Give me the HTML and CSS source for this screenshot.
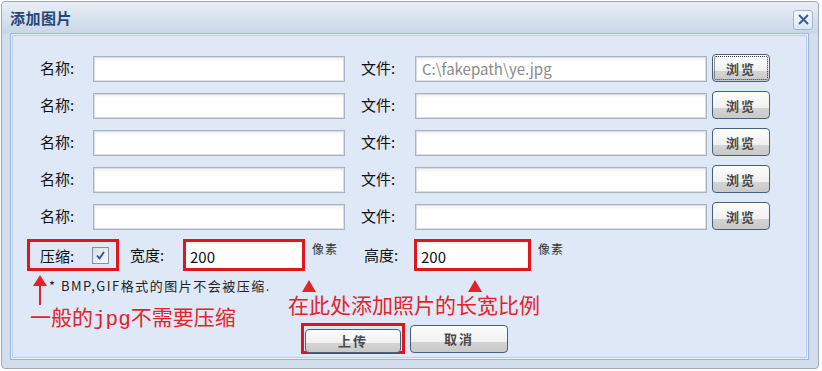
FILE: index.html
```html
<!DOCTYPE html>
<html lang="zh-CN">
<head>
    <meta charset="UTF-8" />
    <title>添加图片</title>
    <link rel="stylesheet" href="styles.css">
</head>
<body>

<div class="dialog">
    <div class="titlebar">
        <span class="title">添加图片</span>
        <button class="close" type="button">
            <svg width="13" height="13" viewBox="0 0 13 13"><path d="M2 2 L11 11 M11 2 L2 11" stroke="#3b5d95" stroke-width="2" fill="none"/></svg>
        </button>
    </div>

    <div class="panel">
        <form id="upload">
            <div class="row">
                <label class="lbl">名称:</label>
                <input type="text" class="txt name" name="name1"/>
                <label class="lbl file-lbl">文件:</label>
                <input type="text" class="txt path" name="file1" value="C:\fakepath\ye.jpg"/>
                <button type="button" class="btn browse focused">浏览</button>
            </div>
            <div class="row">
                <label class="lbl">名称:</label>
                <input type="text" class="txt name" name="name2"/>
                <label class="lbl file-lbl">文件:</label>
                <input type="text" class="txt path" name="file2"/>
                <button type="button" class="btn browse">浏览</button>
            </div>
            <div class="row">
                <label class="lbl">名称:</label>
                <input type="text" class="txt name" name="name3"/>
                <label class="lbl file-lbl">文件:</label>
                <input type="text" class="txt path" name="file3"/>
                <button type="button" class="btn browse">浏览</button>
            </div>
            <div class="row">
                <label class="lbl">名称:</label>
                <input type="text" class="txt name" name="name4"/>
                <label class="lbl file-lbl">文件:</label>
                <input type="text" class="txt path" name="file4"/>
                <button type="button" class="btn browse">浏览</button>
            </div>
            <div class="row">
                <label class="lbl">名称:</label>
                <input type="text" class="txt name" name="name5"/>
                <label class="lbl file-lbl">文件:</label>
                <input type="text" class="txt path" name="file5"/>
                <button type="button" class="btn browse">浏览</button>
            </div>

            <div class="size-row">
                <div class="mark compress">
                    <span class="lbl-inline">压缩:</span>
                    <svg class="check" width="17" height="17" viewBox="0 0 17 17">
                        <defs>
                            <linearGradient id="cb" x1="0" y1="0" x2="1" y2="1">
                                <stop offset="0" stop-color="#d9dee6"/>
                                <stop offset="1" stop-color="#f7f8fa"/>
                            </linearGradient>
                        </defs>
                        <rect x="0.5" y="0.5" width="16" height="16" fill="url(#cb)" stroke="#8391a6"/>
                        <path d="M5 8.5 L7.5 11.5 L12 5" stroke="#2d4f9e" stroke-width="1.8" fill="none"/>
                    </svg>
                </div>
                <span class="lbl size-lbl">宽度:</span>
                <div class="mark field w"><input type="text" name="width" value="200"/></div>
                <span class="unit">像素</span>
                <span class="lbl size-lbl h-lbl">高度:</span>
                <div class="mark field h"><input type="text" name="height" value="200"/></div>
                <span class="unit">像素</span>
            </div>

            <div class="bottom">
                <div class="left">
                    <div class="note">
                        <svg class="arrow" width="14" height="30" viewBox="0 0 14 30">
                            <polygon points="7,0 14,11 0,11" fill="#e3222b"/>
                            <rect x="6" y="10" width="2" height="20" fill="#e3222b"/>
                        </svg>
                        <span class="note-text">* BMP,GIF格式的图片不会被压缩.</span>
                    </div>
                    <div class="red-text hint">一般的<span class="mono">jpg</span>不需要压缩</div>
                </div>
                <div class="right">
                    <div class="tri-row">
                        <svg class="tri" width="14" height="12" viewBox="0 0 14 12"><polygon points="7,0 14,12 0,12" fill="#e3222b"/></svg>
                        <svg class="tri second" width="14" height="12" viewBox="0 0 14 12"><polygon points="7,0 14,12 0,12" fill="#e3222b"/></svg>
                    </div>
                    <div class="red-text">在此处添加照片的长宽比例</div>
                    <div class="actions">
                        <div class="mark submit-mark"><button type="submit" class="btn submit">上传</button></div>
                        <button type="button" class="btn cancel">取消</button>
                    </div>
                </div>
            </div>
        </form>
    </div>
</div>

</body>
</html>
```

FILE: styles.css
```css
* {
    box-sizing: border-box;
}

body {
    margin: 0;
    background-color: #ffffff;
    font-family: "Noto Sans CJK SC", "Liberation Sans", sans-serif;
    color: #111;
}

.dialog {
    margin: 1px 0 0 1px;
    width: 818px;
    height: 368px;
    border: 1px solid #9ea8b6;
    border-radius: 4px;
    background: linear-gradient(#e8eef6, #cad7e7 31px, #d3deec 32px, #d3deec);
}

.titlebar {
    height: 31px;
    display: flex;
    align-items: center;
    justify-content: space-between;
    padding: 0 5px 0 8px;
}

.title {
    font-size: 15px;
    font-weight: bold;
    color: #24467c;
    letter-spacing: 0.5px;
}

.close {
    width: 20px;
    height: 20px;
    padding: 0;
    margin-top: 4px;
    border: 1px solid #a2b5d1;
    border-radius: 3px;
    background: linear-gradient(#f6f9fd, #dbe5f2);
    display: flex;
    align-items: center;
    justify-content: center;
}

.panel {
    margin: 0 0 0 8px;
    width: 799px;
    height: 327px;
    border: 1px solid #9ab3da;
    box-shadow: inset 0 0 0 1px #edf2fa, inset 0 0 0 2px #b9cde9;
    background-color: #dfe8f6;
    padding: 20px 0 0 29px;
}

.row {
    display: flex;
    align-items: center;
    height: 28px;
    margin-bottom: 9px;
}

.lbl {
    width: 53px;
    font-size: 15px;
    line-height: 20px;
}

.file-lbl {
    width: 54px;
    margin-left: 16px;
}

.txt {
    height: 26px;
    margin: 1px 0 0 0;
    border: 1px solid #aab2be;
    box-shadow: inset 0 0 0 1px #d9dee5, inset 0 3px 3px rgba(0,0,0,0.05);
    background: #fff;
    font-family: "Noto Sans CJK SC", "Liberation Sans", sans-serif;
    font-size: 15px;
    padding: 0 6px;
    color: #8a8a8a;
}

.name {
    width: 252px;
}

.path {
    width: 292px;
}

.btn {
    border: 1px solid #45607f;
    border-radius: 4px;
    background: linear-gradient(#fdfdfd, #f0f0f0 60%, #d4d4d4 61%, #c9c9c9);
    font-family: "Noto Sans CJK SC", sans-serif;
    font-size: 13px;
    font-weight: bold;
    color: #4a4a4a;
    letter-spacing: 2px;
    padding: 0;
    cursor: pointer;
}

.browse {
    width: 58px;
    height: 28px;
    margin-left: 5px;
}

.focused {
    outline: 1px dotted #333;
    outline-offset: -3px;
}

/* size row */
.size-row {
    display: flex;
    align-items: center;
    height: 32px;
    margin-top: 4px;
}

.mark {
    border: 3px solid #e0161f;
}

.compress {
    width: 92px;
    height: 32px;
    margin-left: -13px;
    padding: 0 7px 0 10px;
    display: flex;
    align-items: center;
    justify-content: space-between;
}

.lbl-inline {
    font-size: 15px;
}

.size-lbl {
    margin-left: 11px;
}

.h-lbl {
    margin-left: 26px;
    width: 50px;
}

.field {
    height: 32px;
}

.field.w {
    width: 122px;
}

.field.h {
    width: 117px;
}

.field input {
    width: 100%;
    height: 100%;
    border: none;
    box-shadow: inset 0 2px 2px rgba(0,0,0,0.06);
    padding: 2px 0 0 4px;
    font-family: "Noto Sans CJK SC", "Liberation Sans", sans-serif;
    font-size: 15px;
    color: #111;
    background: #fff;
}

.unit {
    align-self: flex-start;
    margin-left: 7px;
    margin-top: 3px;
    font-size: 12px;
    line-height: 14px;
    color: #333;
    letter-spacing: 1px;
}

/* annotations */
.bottom {
    display: flex;
    margin-left: -29px;
}

.left {
    width: 277px;
    padding-left: 22px;
}

.note {
    display: flex;
    align-items: flex-start;
    height: 18px;
    margin-top: 4px;
}

.arrow {
    flex-shrink: 0;
}

.note-text {
    margin-left: 2px;
    padding-top: 3px;
    font-size: 13px;
    line-height: 15px;
    letter-spacing: 1.5px;
    color: #222;
    white-space: nowrap;
}

.red-text {
    font-size: 21px;
    line-height: 24px;
    color: #e3222b;
    white-space: nowrap;
}

.hint {
    margin: 11px 0 0 -3px;
}

.mono {
    font-family: "Liberation Mono", monospace;
}

.right {
    flex: 1;
}

.tri-row {
    display: flex;
    height: 12px;
    margin-top: 9px;
    padding-left: 14px;
}

.tri.second {
    margin-left: 152px;
}

.actions {
    display: flex;
    align-items: center;
    margin: 7px 0 0 13px;
}

.submit-mark {
    width: 104px;
    height: 31px;
    padding: 1px 2px 0 1px;
}

.submit {
    width: 96px;
    height: 24px;
}

.cancel {
    width: 98px;
    height: 28px;
    margin-left: 5px;
}
```
